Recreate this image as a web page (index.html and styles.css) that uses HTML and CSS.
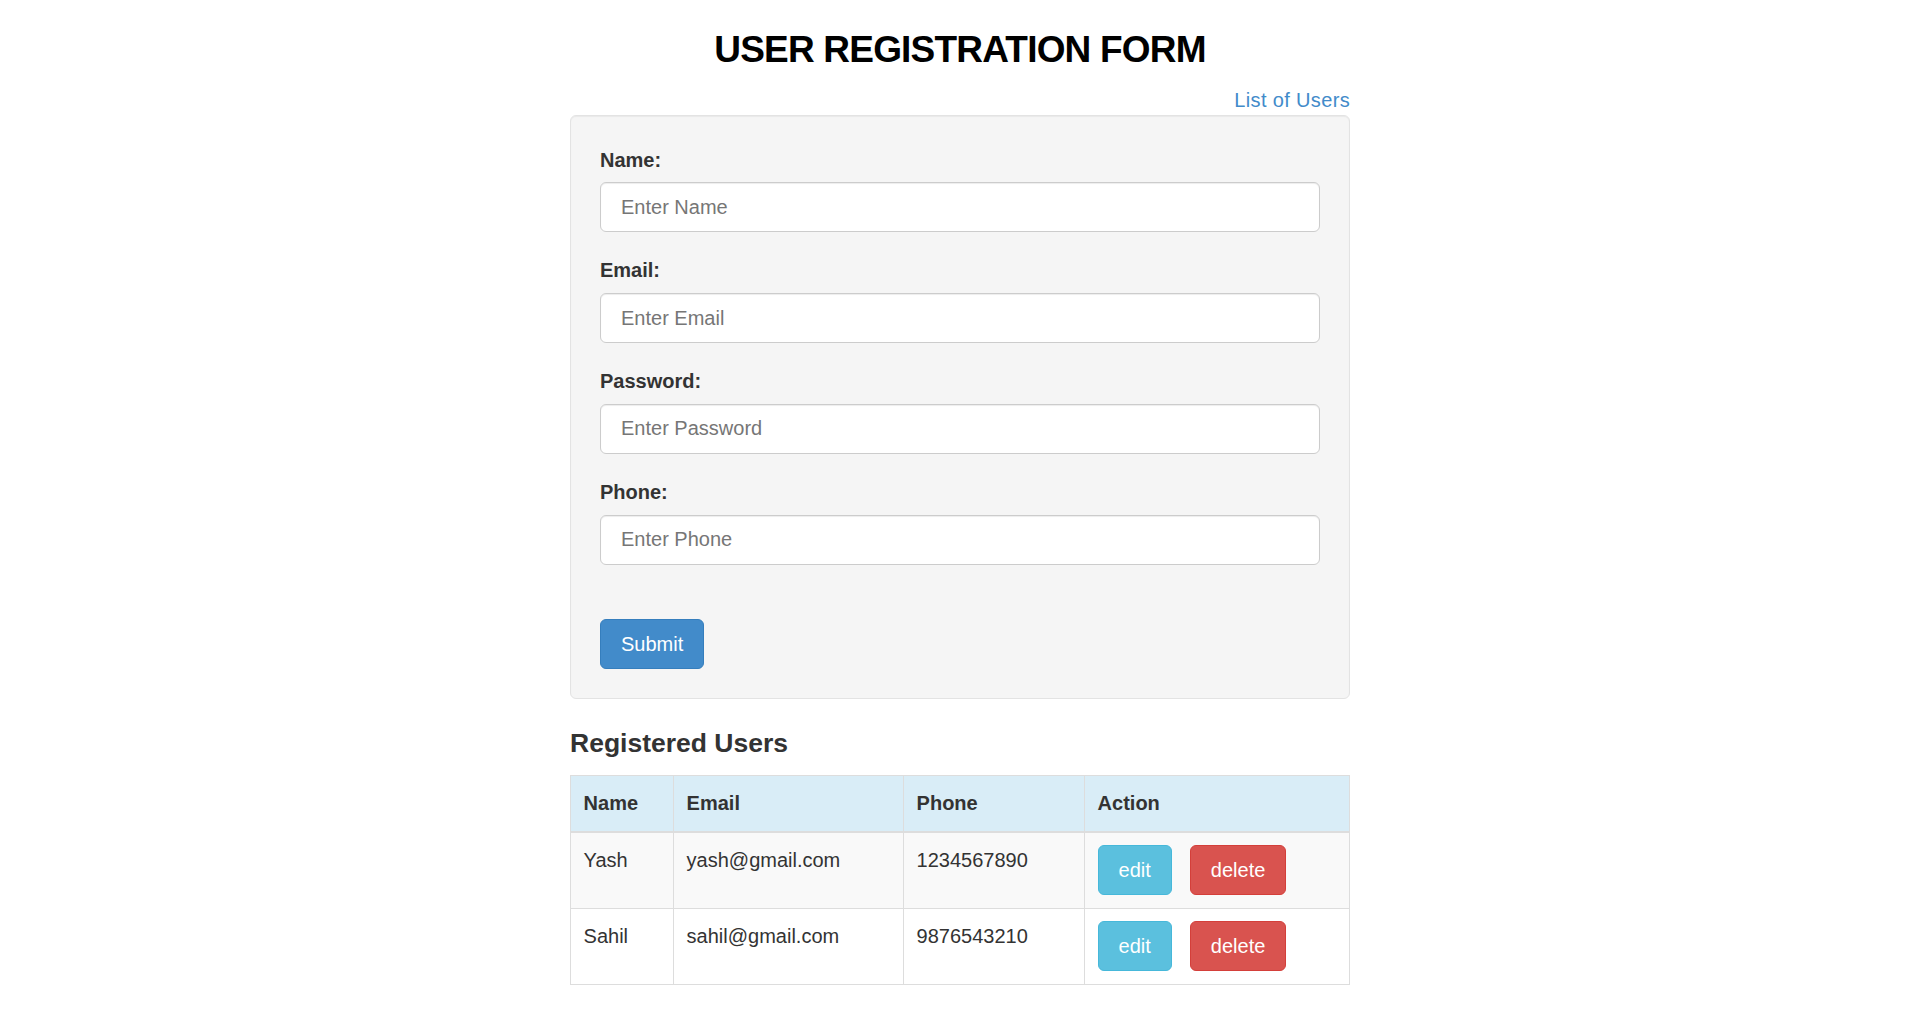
FILE: index.html
```html
<!DOCTYPE html>
<html lang="en">
<head>
<meta charset="utf-8">
<title>User Registration Form</title>
<link rel="stylesheet" href="styles.css">
</head>
<body>
<div class="container">
  <h1 class="title">USER REGISTRATION FORM</h1>
  <div class="top-link"><a href="#" class="link">List of Users</a></div>
  <form class="well">
    <div class="form-group">
      <label class="lbl" for="name">Name:</label>
      <input class="field" id="name" type="text" placeholder="Enter Name">
    </div>
    <div class="form-group">
      <label class="lbl" for="email">Email:</label>
      <input class="field" id="email" type="email" placeholder="Enter Email">
    </div>
    <div class="form-group">
      <label class="lbl" for="password">Password:</label>
      <input class="field" id="password" type="password" placeholder="Enter Password">
    </div>
    <div class="form-group">
      <label class="lbl" for="phone">Phone:</label>
      <input class="field" id="phone" type="text" placeholder="Enter Phone">
    </div>
    <button type="button" class="btn btn-primary btn-submit">Submit</button>
  </form>

  <h3 class="section-title">Registered Users</h3>
  <table class="users">
    <thead>
      <tr class="head-row">
        <th class="c-name">Name</th>
        <th class="c-email">Email</th>
        <th class="c-phone">Phone</th>
        <th class="c-action">Action</th>
      </tr>
    </thead>
    <tbody>
      <tr class="row-odd">
        <td>Yash</td>
        <td>yash@gmail.com</td>
        <td>1234567890</td>
        <td class="action-cell"><div class="actions"><button type="button" class="btn btn-info">edit</button><button type="button" class="btn btn-danger">delete</button></div></td>
      </tr>
      <tr class="row-even">
        <td>Sahil</td>
        <td>sahil@gmail.com</td>
        <td>9876543210</td>
        <td class="action-cell"><div class="actions"><button type="button" class="btn btn-info">edit</button><button type="button" class="btn btn-danger">delete</button></div></td>
      </tr>
    </tbody>
  </table>
</div>
</body>
</html>
```

FILE: styles.css
```css
* {
  box-sizing: border-box;
}

html, body {
  margin: 0;
  padding: 0;
  background: #ffffff;
}

body {
  font-family: "Liberation Sans", Arial, Helvetica, sans-serif;
  font-size: 20px;
  line-height: 28.6px;
  color: #333333;
}

.container {
  width: 780px;
  margin: 0 auto;
}

.title {
  margin: 29px -100px 0;
  font-size: 37px;
  line-height: 41px;
  font-weight: bold;
  letter-spacing: -0.8px;
  color: #000000;
  text-align: center;
}

.top-link {
  margin-top: 15.5px;
  text-align: right;
  line-height: 28.6px;
}

.link {
  color: #428bca;
  text-decoration: none;
  letter-spacing: 0.35px;
}

.well {
  margin: 1px 0 0;
  padding: 29.5px 29px 29px;
  background: #f5f5f5;
  border: 1px solid #e3e3e3;
  border-radius: 6px;
  box-shadow: inset 0 1px 1px rgba(0, 0, 0, 0.05);
}

.form-group {
  margin-bottom: 24.3px;
}

.lbl {
  display: block;
  font-weight: bold;
  margin-bottom: 8px;
  line-height: 28.6px;
}

.field {
  display: block;
  width: 100%;
  height: 50px;
  padding: 0 20px;
  font-family: inherit;
  font-size: 20px;
  color: #555555;
  background: #ffffff;
  border: 1px solid #cccccc;
  border-radius: 6px;
  box-shadow: inset 0 1px 1px rgba(0, 0, 0, 0.075);
  outline: none;
}

.field::placeholder {
  color: #767676;
  opacity: 1;
}

.btn {
  display: inline-block;
  padding: 10px 20px;
  font-family: inherit;
  font-size: 20px;
  line-height: 28.6px;
  font-weight: normal;
  color: #ffffff;
  border: 1px solid transparent;
  border-radius: 6px;
  cursor: pointer;
}

.btn-submit {
  display: block;
  margin-top: 54px;
}

.btn-primary {
  background: #428bca;
  border-color: #357ebd;
}

.btn-info {
  background: #5bc0de;
  border-color: #46b8da;
}

.btn-danger {
  background: #d9534f;
  border-color: #d43f3a;
}

.section-title {
  margin: 29.3px 0 17.3px;
  font-size: 26.5px;
  line-height: 29px;
  font-weight: bold;
  color: #333333;
}

.users {
  width: 100%;
  border-collapse: collapse;
  border-spacing: 0;
  border: 1px solid #dddddd;
  table-layout: fixed;
}

.users th,
.users td {
  padding: 13px 12.6px;
  text-align: left;
  vertical-align: top;
  border: 1px solid #dddddd;
  line-height: 28.6px;
}

.users th {
  font-weight: bold;
  border-bottom: 2px solid #dddddd;
}

.head-row {
  background: #d9edf7;
}

.c-name {
  width: 103px;
}

.c-email {
  width: 230px;
}

.c-phone {
  width: 181px;
}

.row-odd {
  background: #f9f9f9;
}

.row-even {
  background: #ffffff;
}

.users td.action-cell {
  padding: 12px 12.6px 12.5px;
}

.actions {
  display: flex;
  gap: 18px;
}
```
